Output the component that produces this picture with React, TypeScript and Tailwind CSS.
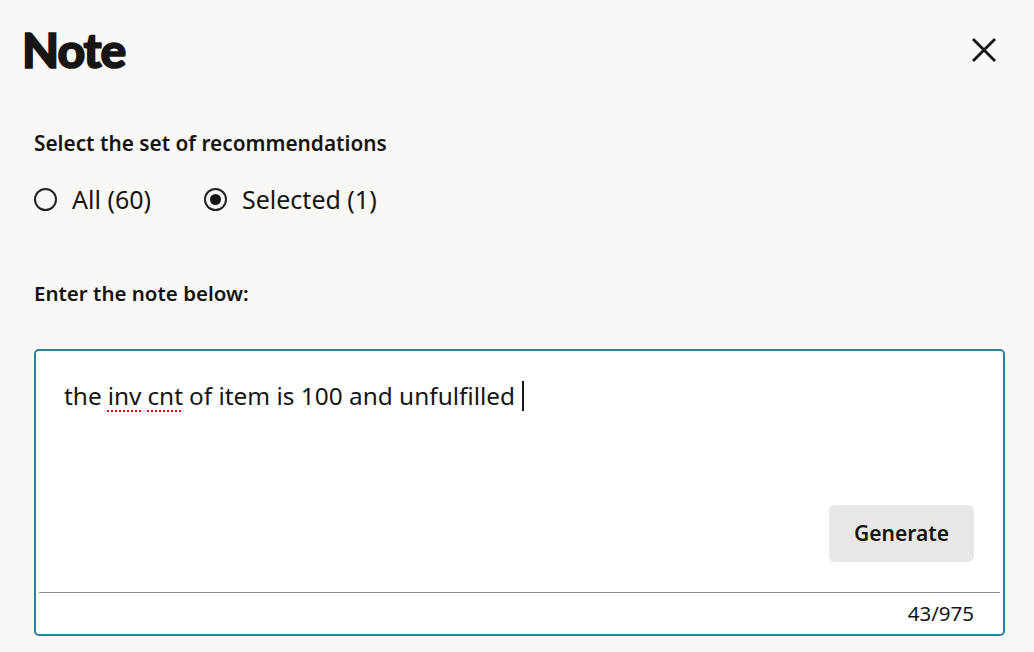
import React from "react";

export default function App() {
  const font = { fontFamily: '"Noto Sans", "Open Sans", sans-serif' };
  return (
    <div className="w-[1034px] h-[652px] bg-[#f9f8f6] text-[#161513] overflow-hidden" style={font}>
      <div className="flex items-center justify-between pl-[22px] pr-[38px] h-[102px]">
        <h1
          className="text-[48px] font-black leading-none -mt-[2px] tracking-[-1px] [-webkit-text-stroke:1.6px_#161513]"
          style={{ fontFamily: 'Lato, "Noto Sans", sans-serif' }}
        >
          Note
        </h1>
        <svg width="24" height="24" viewBox="0 0 24 24" className="-mt-[2px]">
          <path d="M2 2 L22 22 M22 2 L2 22" stroke="#161513" strokeWidth="2.8" strokeLinecap="square" fill="none" />
        </svg>
      </div>
      <div className="pl-[34px] pr-[29px]">
        <div className="text-[20.8px] font-semibold leading-none mt-[31px]">Select the set of recommendations</div>
        <div className="flex items-center mt-[30px] h-[32px] text-[25px]">
          <label className="flex items-center">
            <span className="w-[23px] h-[23px] rounded-full border-2 border-[#222]" />
            <span className="ml-[15px]">All (60)</span>
          </label>
          <label className="flex items-center ml-[53px]">
            <span className="w-[23px] h-[23px] rounded-full border-2 border-[#222] flex items-center justify-center">
              <span className="w-[11px] h-[11px] rounded-full bg-[#161513]" />
            </span>
            <span className="ml-[15px]">Selected (1)</span>
          </label>
        </div>
        <div className="text-[20.5px] font-semibold leading-none mt-[67px]">Enter the note below:</div>
        <div className="mt-[46px] h-[287px] border-2 border-[#2a80a3] rounded-[5px] bg-white flex flex-col">
          <div className="flex-1 flex flex-col px-[28px] pt-[29px]">
            <div className="text-[24.4px] leading-[32px] flex items-center">
              <span>the</span>
              <span className="underline decoration-dotted decoration-red-600 decoration-2 underline-offset-[5px] ml-[6px]">inv</span>
              <span className="ml-[6px] underline decoration-dotted decoration-red-600 decoration-2 underline-offset-[5px]">cnt</span>
              <span className="ml-[6px]">of item is 100 and unfulfilled</span>
              <span className="ml-[7px] w-[1.5px] h-[30px] bg-[#161513]" />
            </div>
            <div className="flex-1" />
            <div className="flex justify-end pr-[1px] mb-[30px]">
              <button className="w-[145px] h-[57px] rounded-[6px] bg-[#e9e7e6] text-[21px] font-semibold">Generate</button>
            </div>
          </div>
          <div className="mx-[3px] h-[1px] bg-[#8a8a8a]" />
          <div className="h-[41px] flex items-center justify-end pr-[29px] text-[20.5px]">43/975</div>
        </div>
      </div>
    </div>
  );
}
